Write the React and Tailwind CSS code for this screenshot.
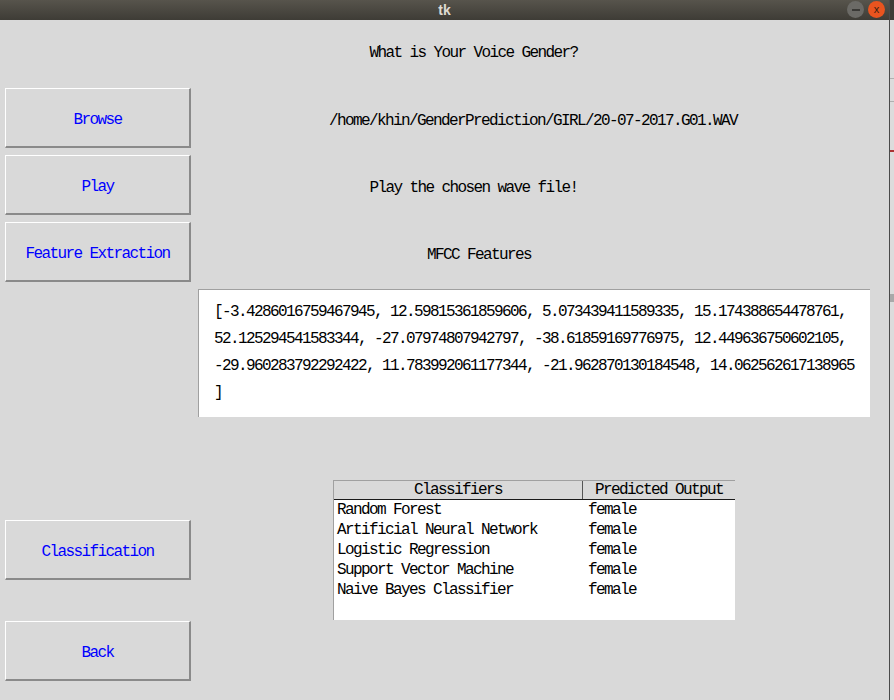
const mono = "font-['Liberation_Mono',monospace] text-[16px] tracking-[-1.6px]";

function TkButton({ label, className = "" }) {
  return (
    <div
      className={`ml-[5px] flex h-[60px] w-[186px] items-center justify-center pt-[4px] border-t border-l border-t-white border-l-white border-b-2 border-r-2 border-b-[#8a8a8a] border-r-[#8a8a8a] text-[#0000ff] ${mono} ${className}`}
    >
      {label}
    </div>
  );
}

const rows = [
  ["Random Forest", "female"],
  ["Artificial Neural Network", "female"],
  ["Logistic Regression", "female"],
  ["Support Vector Machine", "female"],
  ["Naive Bayes Classifier", "female"],
];

export default function App() {
  return (
    <div className="flex h-[700px] w-[894px] overflow-hidden bg-[#d9d9d9]">
      <div className="flex w-[889px] flex-col">
        {/* title bar */}
        <div className="relative flex h-[20px] items-center justify-center bg-gradient-to-b from-[#57544c] to-[#3e3c36]">
          <span className="font-['Liberation_Sans',sans-serif] text-[14px] font-bold text-[#dfdbd2]">tk</span>
          <div className="absolute right-[4px] top-[1px] flex gap-[4px]">
            <div className="flex h-[17px] w-[17px] items-center justify-center rounded-full bg-[#6b6a66]">
              <div className="h-[2px] w-[8px] bg-[#3a3936]" />
            </div>
            <div className="flex h-[17px] w-[17px] items-center justify-center rounded-full bg-[#e9541f] font-['Liberation_Sans',sans-serif] text-[11px] text-[#3a2010]">
              x
            </div>
          </div>
        </div>

        <div className={`flex h-[60px] items-center justify-center pt-[6px] pl-[58px] ${mono} text-black`}>
          What is Your Voice Gender?
        </div>

        <div className="mt-[8px] flex flex-col gap-[7px]">
          <div className="flex items-center">
            <TkButton label="Browse" />
            <div className={`flex-1 pt-[6px] pr-[14px] text-center ${mono}`}>/home/khin/GenderPrediction/GIRL/20-07-2017.G01.WAV</div>
          </div>
          <div className="flex items-center">
            <TkButton label="Play" />
            <div className={`flex-1 pt-[6px] pr-[133px] text-center ${mono}`}>Play the chosen wave file!</div>
          </div>
          <div className="flex items-center">
            <TkButton label="Feature Extraction" />
            <div className={`flex-1 pt-[6px] pr-[122px] text-center ${mono}`}>MFCC Features</div>
          </div>
        </div>

        <div className="ml-[198px] mt-[7px] h-[128px] w-[672px] border-t border-l border-[#a0a0a0] bg-white px-[15px] pt-[9px]">
          <div className={`${mono} leading-[27px] text-black`}>
            [-3.4286016759467945, 12.59815361859606, 5.073439411589335, 15.174388654478761,
            <br />
            52.125294541583344, -27.07974807942797, -38.61859169776975, 12.449636750602105,
            <br />
            -29.960283792292422, 11.783992061177344, -21.962870130184548, 14.062562617138965
            <br />]
          </div>
        </div>

        <div className="mt-[63px] flex items-start">
          <div className="mt-[40px]">
            <TkButton label="Classification" />
          </div>
          <div className="ml-[142px] h-[140px] w-[402px] border-t border-l border-[#a0a0a0] bg-white">
            <div className={`flex h-[19px] border-b border-[#1a1a1a] bg-[#d9d9d9] ${mono} leading-[19px]`}>
              <div className="w-[249px] border-r border-[#555] text-center">Classifiers</div>
              <div className="flex-1 text-center">Predicted Output</div>
            </div>
            <div>
              {rows.map(([name, out]) => (
                <div key={name} className={`flex h-[20px] items-center ${mono}`}>
                  <div className="w-[254px] pl-[3px]">{name}</div>
                  <div>{out}</div>
                </div>
              ))}
            </div>
          </div>
        </div>

        <div className="mt-[1px]">
          <TkButton label="Back" />
        </div>
      </div>

      {/* edge of window behind */}
      <div className="flex w-[5px] flex-col border-l border-[#4a4a4a] bg-[#dcdcdc]">
        <div className="h-[20px] bg-[#3e3c36]" />
        <div className="mt-[58px] h-px bg-[#b0b0b0]" />
        <div className="mt-[22px] h-px bg-[#b0b0b0]" />
        <div className="mt-[48px] h-[2px] bg-[#a33]" />
        <div className="mt-[142px] h-[8px] bg-[#a9a9a9]" />
      </div>
    </div>
  );
}
